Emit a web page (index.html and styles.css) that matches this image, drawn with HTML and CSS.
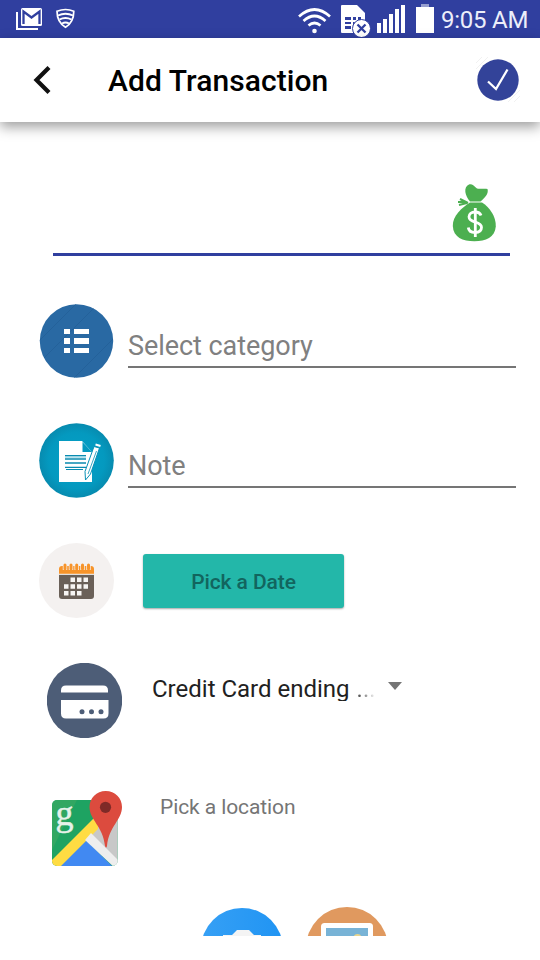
FILE: index.html
```html
<!DOCTYPE html>
<html lang="en">
<head>
<meta charset="utf-8">
<title>Add Transaction</title>
<link rel="stylesheet" href="styles.css">
</head>
<body>
<div class="statusbar">
  <svg class="notifications" viewBox="0 0 62 24" width="62" height="24">
    <path d="M1 5v17h21" fill="none" stroke="#fff" stroke-width="2"/>
    <rect x="5" y="1" width="21" height="18" rx="1.500" fill="#fff"/>
    <path d="M7.500 17V4.500l8 6 8-6V17" fill="none" stroke="#303f9f" stroke-width="2.300"/>
    <path d="M49.500 2.500c3 0 6 .7 8.300 1.700 0 7-2.300 12.500-8.300 16-6-3.500-8.500-9-8.500-16 2.500-1 5.500-1.700 8.500-1.700z" fill="none" stroke="#fff" stroke-width="1.700"/>
    <path d="M42 8.500q7.500-3.500 15 0M43.500 12.500q6-3 12 0M46 16.500q3.500-2 7 0" fill="none" stroke="#fff" stroke-width="1.900"/>
  </svg>
  <svg class="signals" viewBox="298 3 138 34" width="138" height="34">
    <g fill="none" stroke="#fff" stroke-width="2.700">
      <path d="M299 16.500q15.500-14 31 0M303.500 21q11-10 22 0M308.500 25.500q6-5 12 0"/>
    </g>
    <circle cx="314.500" cy="31" r="2.300" fill="#fff"/>
    <path d="M342 5h15l8 8v20h-23q-1 0-1-1V6q0-1 1-1z" fill="#fff"/>
    <path d="M345 17h6v3h-6zM353 17h3v3h-3zM358 17h3v3h-3zM345 22h6v2h-6zM345 26h6v3h-6zM353 22h4v7h-4z" fill="#303f9f"/>
    <circle cx="361.500" cy="28.500" r="9" fill="#fff" stroke="#303f9f" stroke-width="1"/>
    <path d="M357.500 24.500l8 8m0-8l-8 8" stroke="#303f9f" stroke-width="2.300"/>
    <path d="M377 23h4v10h-4zM383 19h4v14h-4zM389 14h4v19h-4zM395 9h4v24h-4zM401 5h4v28h-4zM416 7h18v26h-18z" fill="#fff"/>
    <path d="M421 4h8v3h-8z" fill="#979fcf"/>
  </svg>
  <span class="clock">9:05 AM</span>
</div>
<header class="appbar">
  <svg class="back" viewBox="33 65 18 30" width="18" height="30"><path d="M49 67.500L36.500 80 49 92.500" fill="none" stroke="#111" stroke-width="4.200"/></svg>
  <h1>Add Transaction</h1>
  <svg class="confirm" viewBox="475 57 46 46" width="46" height="46">
    <path d="M476 63l6-6M476 69l12-12M508 102l12-12M514 102l6-6" stroke="#eee" stroke-width=".8"/>
    <circle cx="498" cy="80" r="20.700" fill="#334399"/>
    <path d="M488 81.500l8 7.500 11.500-19.500" fill="none" stroke="#fff" stroke-width="2.300"/>
  </svg>
</header>
<main class="form">
  <div class="amount">
    <svg viewBox="452 183 44 60" width="44" height="60">
      <path d="M469 184.500c3-1 5 1.500 8 4 3 1 7-.5 10.500.5 1.500 5-3 9-7 12.500h-10.500c-5-6-7-14-1-17z" fill="#4caf50"/>
      <path d="M470 202.500h12c8 5 14 14 13.800 24-1 11-10 14.800-21.500 14.800s-21-4-21.500-15.300c-.3-10 9-18.500 17.200-23.500z" fill="#4caf50"/>
      <path d="M468 203l-8-4M467 203l-8 2M465 202l-7 0" stroke="#4caf50" stroke-width="2"/>
      <path d="M475.300 208v29" stroke="#fff" stroke-width="2.800"/>
      <path d="M481 215.500c-1-3-3.500-3.500-6-3.500-3.500 0-6 1.800-6 4.800 0 7 12.500 3.500 12.500 10.500 0 3.500-2.500 5.200-6.500 5.200-3.500 0-6.300-1.500-6.700-5" fill="none" stroke="#fff" stroke-width="2.800"/>
    </svg>
  </div>
  <div class="row">
    <svg viewBox="39 303 75 75" width="75" height="75">
      <clipPath id="cat"><circle cx="76.500" cy="341" r="36.700"/></clipPath>
      <circle cx="76.500" cy="341" r="36.700" fill="#2969a3"/>
      <g clip-path="url(#cat)"><path d="M38 342l39-39M42 360l54-54M70 382l44-44M90 382l30-30" stroke="#235f98" stroke-width=".8"/></g>
      <path d="M64 329h6v5h-6zM74 329h15v5H74zM64 338h6v6h-6zM74 338h15v6H74zM64 348h6v5h-6zM74 348h15v5H74z" fill="#fff"/>
    </svg>
    <div class="field">Select category</div>
  </div>
  <div class="row">
    <svg viewBox="39 423 75 75" width="75" height="75">
      <defs><radialGradient id="teal"><stop offset="0" stop-color="#04a1c8"/><stop offset=".75" stop-color="#0499bf"/><stop offset="1" stop-color="#078baf"/></radialGradient></defs>
      <circle cx="76.500" cy="460.500" r="37.300" fill="url(#teal)"/>
      <path d="M59 441h23l10 11v30H59z" fill="#fff"/>
      <path d="M82.500 442v10H92z" fill="#0499bf"/>
      <path d="M65 455.700h21M65 459h21M65 463h21M65 467.300h21" stroke="#0a8bb0" stroke-width="1.300"/><path d="M65 457h21" stroke="#75c7dc"/>
      <path d="M66 469.500h17" stroke="#0a8bb0" stroke-width="1"/>
      <path d="M94 446.500l5.500 1.500-9 26-5 6-.5-8.500z" fill="#fff" stroke="#0790b5" stroke-width="1"/>
      <path d="M95.500 444.500l5 1.500" stroke="#fff" stroke-width="2"/>
      <path d="M96.500 451l-8.500 23" stroke="#0790b5" stroke-width=".8"/>
    </svg>
    <div class="field">Note</div>
  </div>
  <div class="row">
    <svg viewBox="39 543 75 75" width="75" height="75">
      <circle cx="76.500" cy="580.500" r="37.500" fill="#f4f1f0"/>
      <path d="M59 574h35v22q0 3-3 3H62q-3 0-3-3z" fill="#6a6058"/>
      <path d="M59 574v-5q0-3 3-3h29q3 0 3 3v5z" fill="#f7942a"/>
      <path d="M65 565v5M71 565v5M76.700 565v5M82.500 565v5M88.500 565v5" stroke="#f4f1f0" stroke-width="4.400"/>
      <path d="M65 565v4M71 565v4M76.700 565v4M82.500 565v4M88.500 565v4" stroke="#f7942a" stroke-width="3" stroke-linecap="round"/>
      <path d="M59 574.300h35" stroke="#fff" stroke-width="1"/>
      <path d="M70.500 577.500h4.500v4.500h-4.500zM77 577.500h4.500v4.500H77zM83.500 577.500H88v4.500h-4.500zM64 584.200h4.500v4.500H64zM70.500 584.200h4.500v4.500h-4.500zM77 584.200h4.500v4.500H77zM83.500 584.200H88v4.500h-4.500zM64 591h4.500v4.500H64zM70.500 591h4.500v4.500h-4.500zM77 591h4.500v4.500H77z" fill="#f7f5f3"/>
    </svg>
    <button class="date">Pick a Date</button>
  </div>
  <div class="row card">
    <svg viewBox="47 663 75 75" width="75" height="75">
      <circle cx="84.500" cy="700.500" r="37.700" fill="#4d5d77"/>
      <path d="M61 692.500v-2q0-5 5-5h37q5 0 5 5v2zM61 700h47.500v13.500q0 5-5 5H66q-5 0-5-5z" fill="#fff"/>
      <g fill="#4d5d77"><circle cx="82" cy="711.700" r="2.500"/><circle cx="91.500" cy="711.700" r="2.500"/><circle cx="101" cy="711.700" r="2.500"/></g>
    </svg>
    <div class="select"><span class="account">Credit Card ending <span class="dots">...</span></span><i class="caret"></i></div>
  </div>
  <div class="row place">
    <svg viewBox="47 791 75 75" width="75" height="75">
      <clipPath id="map"><rect x="52" y="800" width="65.500" height="66" rx="5"/></clipPath>
      <g clip-path="url(#map)">
        <path d="M50 798h70v70H50z" fill="#1ea362"/>
        <path d="M50 798h28L52 850z" fill="#3daa63" opacity=".6"/>
        <path d="M85 839l33-38v65z" fill="#c8c8c8"/>
        <path d="M57 868l28-29 29 29z" fill="#4189f2"/>
        <path d="M50 862l48-48v15l-39 39h-9z" fill="#ffdc43"/>
        <path d="M85 840l6-7 30 30-5 6z" fill="#eee"/>
      </g>
      <text x="55.500" y="824.500" class="glyph">g</text>
      <path d="M105.700 791c9.500 0 16.300 7 16.300 16 0 13-13 19-15 39q-.8 3-2 0c-2-20-15.500-26-15.500-39 0-9 7-16 16.200-16z" fill="#dc4b3e"/>
      <circle cx="105.500" cy="807.300" r="5.600" fill="#7f2a27"/>
    </svg>
    <div class="location">Pick a location</div>
  </div>
  <div class="attachments">
    <svg viewBox="201 907 82 82" width="82" height="82">
      <defs><linearGradient id="blue"><stop offset="0" stop-color="#36a0f5"/><stop offset="1" stop-color="#2094f3"/></linearGradient></defs>
      <circle cx="242" cy="949" r="41" fill="url(#blue)"/>
      <path d="M223 940v-5h9l5-5h12l5 5h7v30h-38z" fill="#f4f4f4"/>
    </svg>
    <svg viewBox="306 907 82 82" width="82" height="82">
      <circle cx="347" cy="948" r="41" fill="#e0995f"/>
      <rect x="321" y="923" width="52" height="50" rx="3.500" fill="#fff"/>
      <path d="M326 928h42v34h-42z" fill="#78b3d6"/>
      <circle cx="357.500" cy="938" r="4" fill="#e8d48c"/>
    </svg>
  </div>
</main>
</body>
</html>
```
FILE: styles.css
```css
* { box-sizing: border-box; }
body {
  margin: 0;
  width: 540px;
  height: 960px;
  overflow: hidden;
  display: flex;
  flex-direction: column;
  background: #fff;
  font-family: Roboto, sans-serif;
}
svg { display: block; flex: none; }
.statusbar {
  height: 38px;
  flex: none;
  display: flex;
  align-items: flex-start;
  padding-left: 16px;
  background: #303f9f;
  color: #fff;
}
.notifications { margin-top: 7px; }
.signals { margin: 3px 0 0 220px; }
.clock {
  margin-left: 5px;
  font-size: 24px;
  line-height: 40px;
  letter-spacing: -.25px;
  white-space: nowrap;
  color: #eceefa;
}
.appbar {
  height: 84px;
  flex: none;
  display: flex;
  align-items: center;
  padding: 0 19px 0 33px;
  background: #fff;
  box-shadow: 0 5px 12px rgba(0, 0, 0, .38);
  z-index: 1;
}
.appbar h1 {
  margin: 2px 0 0 57px;
  font-size: 30px;
  font-weight: 500;
  line-height: 36px;
  letter-spacing: .07px;
  color: #000;
}
.confirm { margin-left: auto; }
.form {
  height: 814px;
  flex: none;
  overflow: hidden;
}
.amount {
  height: 134px;
  margin: 0 30px 47px 53px;
  padding: 61px 14px 0 0;
  display: flex;
  justify-content: flex-end;
  border-bottom: 3px solid #303f9f;
}
.row {
  height: 75px;
  margin: 0 24px 45px 39px;
  display: flex;
  align-items: flex-start;
}
.field {
  width: 388px;
  height: 65px;
  margin-left: 14px;
  padding-top: 27px;
  border-bottom: 2px solid #757575;
  color: #808080;
  font-size: 27px;
  line-height: 32px;
  letter-spacing: -.06px;
}
.date {
  width: 201px;
  height: 54px;
  margin: 11px 0 0 29px;
  padding: 2px 0 0;
  border: 0;
  border-radius: 3px;
  background: #23b7a9;
  box-shadow: 0 1px 2px rgba(0, 0, 0, .35);
  color: #12655e;
  font: 500 21px/25px Roboto, sans-serif;
  letter-spacing: -.1px;
}
.card { margin-left: 47px; margin-bottom: 53px; }
.place { margin-left: 47px; margin-bottom: 41px; }
.select {
  margin: 12px 0 0 30px;
  display: flex;
}
.account {
  width: 222px;
  height: 26px;
  overflow: hidden;
  white-space: nowrap;
  font-size: 24px;
  line-height: 29px;
  color: #212121;
}
.dots {
  margin-left: 1px;
  color: transparent;
  background: linear-gradient(90deg, #444, #fff);
  background-clip: text;
  -webkit-background-clip: text;
}
.caret {
  width: 14px;
  height: 8px;
  margin: 7px 0 0 14px;
  background: #757575;
  clip-path: polygon(0 0, 100% 0, 50% 100%);
}
.location {
  margin: 4px 0 0 38px;
  font-size: 21px;
  line-height: 25px;
  letter-spacing: -.1px;
  color: #757575;
}
.glyph {
  font-family: "Liberation Serif", serif;
  font-size: 36px;
  fill: #e6f2ea;
  stroke: #e6f2ea;
  stroke-width: .5px;
}
.attachments {
  display: flex;
  gap: 23px;
  margin-left: 201px;
}
```
